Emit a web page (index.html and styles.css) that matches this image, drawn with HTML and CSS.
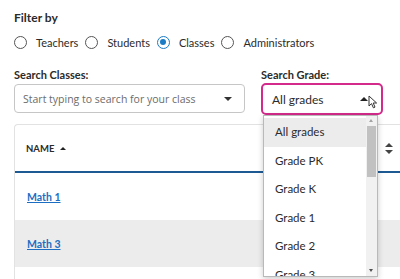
FILE: index.html
```html
<!DOCTYPE html>
<html>
<head>
    <title>Class Filter</title>
    <link rel="stylesheet" href="styles.css">
</head>
<body>
    <div class="page">
        <div class="filter-title">Filter by</div>
        <div class="radios">
            <label class="radio"><span class="ring"></span>Teachers</label>
            <label class="radio"><span class="ring"></span>Students</label>
            <label class="radio checked"><span class="ring"></span>Classes</label>
            <label class="radio"><span class="ring"></span>Administrators</label>
        </div>

        <div class="search-row">
            <div class="field field-class">
                <div class="field-label">Search Classes:</div>
                <div class="combo">
                    <span class="placeholder">Start typing to search for your class</span>
                    <span class="caret-down"></span>
                </div>
            </div>
            <div class="field field-grade">
                <div class="field-label">Search Grade:</div>
                <div class="select">
                    <span>All grades</span>
                    <span class="caret-up"></span>
                    <svg class="pointer" width="10" height="14" viewBox="0 0 10 14">
                        <path d="M1 1 L1 11 L3.5 8.6 L5.4 12.8 L7 12.1 L5.2 8 L8.6 8 Z" fill="#fff" stroke="#333" stroke-width="1" stroke-linejoin="round"/>
                    </svg>
                </div>
                <div class="options">
                    <ul>
                        <li class="active">All grades</li>
                        <li>Grade PK</li>
                        <li>Grade K</li>
                        <li>Grade 1</li>
                        <li>Grade 2</li>
                        <li>Grade 3</li>
                    </ul>
                    <div class="scrollbar">
                        <span class="arrow-up"></span>
                        <span class="thumb"></span>
                        <span class="arrow-down"></span>
                    </div>
                </div>
            </div>
        </div>

        <div class="table-card">
            <div class="thead">
                <span class="th-name">NAME <span class="sort-up"></span></span>
                <span class="th-right">
                    <span class="grip"></span>
                    <svg class="sort-both" width="8" height="11" viewBox="0 0 8 11">
                        <path d="M4 0 L8 4 L0 4 Z M0 7 L8 7 L4 11 Z" fill="#444"/>
                    </svg>
                </span>
            </div>
            <div class="row"><a href="#">Math 1</a></div>
            <div class="row alt"><a href="#">Math 3</a></div>
            <div class="row last"></div>
        </div>
    </div>
</body>
</html>
```

FILE: styles.css
```css
body {
    margin: 0;
    font-family: Lato, "Noto Sans", sans-serif;
    color: #2b2b2b;
    background-color: #fff;
    overflow: hidden;
}
.page {
    padding: 11px 0 0 14px;
    width: 386px;
}
.filter-title {
    font-size: 12px;
    font-weight: 700;
    line-height: 14px;
}
.radios {
    display: flex;
    align-items: center;
    margin-top: 9px;
    height: 16px;
}
.radio {
    display: flex;
    align-items: center;
    font-size: 11px;
    margin-right: 7px;
}
.ring {
    width: 11px;
    height: 11px;
    border: 1.5px solid #555;
    border-radius: 50%;
    margin-right: 9px;
    position: relative;
}
.radio.checked .ring {
    border-color: #1b7bc4;
}
.radio.checked .ring::after {
    content: "";
    position: absolute;
    left: 2.5px;
    top: 2.5px;
    width: 6px;
    height: 6px;
    border-radius: 50%;
    background-color: #1b7bc4;
}
.search-row {
    display: flex;
    margin-top: 18px;
}
.field-label {
    font-size: 11px;
    font-weight: 700;
    line-height: 14px;
}
.field-class {
    width: 231px;
    margin-right: 16px;
}
.combo {
    margin-top: 2px;
    height: 27px;
    border: 1px solid #c6c6c6;
    border-radius: 4px;
    display: flex;
    align-items: center;
    justify-content: space-between;
    padding: 0 12px 0 8px;
}
.placeholder {
    font-family: "Open Sans", sans-serif;
    font-size: 10.5px;
    color: #6b6b6b;
}
.caret-down {
    border-left: 4px solid transparent;
    border-right: 4px solid transparent;
    border-top: 4px solid #333;
}
.field-grade {
    position: relative;
    width: 122px;
}
.select {
    margin-top: 1px;
    height: 28px;
    border: 2px solid #d42a8c;
    border-radius: 5px;
    display: flex;
    align-items: center;
    padding: 0 0 0 9px;
    font-size: 12px;
    position: relative;
}
.caret-up {
    margin-left: auto;
    margin-right: 13px;
    border-left: 4px solid transparent;
    border-right: 4px solid transparent;
    border-bottom: 4px solid #222;
}
.pointer {
    position: absolute;
    right: 3px;
    top: 10px;
}
.options {
    position: absolute;
    left: 2px;
    top: 47px;
    width: 113px;
    height: 160px;
    border: 1px solid #b9b9b9;
    background-color: #fff;
    box-shadow: 0 2px 6px rgba(0, 0, 0, 0.2);
    display: flex;
    overflow: hidden;
    z-index: 2;
}
.options ul {
    list-style: none;
    margin: 0;
    padding: 2px 0 0 0;
    flex-grow: 1;
}
.options li {
    height: 28.5px;
    line-height: 28.5px;
    padding-left: 11px;
    font-size: 11.5px;
}
.options li.active {
    background-color: #ececec;
}
.scrollbar {
    width: 11px;
    background-color: #f1f1f1;
    position: relative;
}
.arrow-up, .arrow-down {
    position: absolute;
    left: 3px;
    border-left: 2.5px solid transparent;
    border-right: 2.5px solid transparent;
}
.arrow-up {
    top: 3px;
    border-bottom: 3px solid #a3a3a3;
}
.arrow-down {
    bottom: 4px;
    border-top: 3px solid #505050;
}
.thumb {
    position: absolute;
    left: 1px;
    right: 1px;
    top: 10px;
    height: 51px;
    background-color: #c1c1c1;
}
.table-card {
    margin-top: 9px;
    border: 1px solid #e2e2e2;
    border-right: none;
    border-bottom: none;
    border-radius: 4px 0 0 0;
}
.thead {
    height: 46px;
    border-bottom: 2px solid #1d5a93;
    display: flex;
    align-items: center;
    justify-content: space-between;
    padding: 0 7px 0 11px;
}
.th-name {
    font-size: 9.5px;
    font-weight: 700;
    display: flex;
    align-items: center;
}
.sort-up {
    margin-left: 6px;
    border-left: 3.5px solid transparent;
    border-right: 3.5px solid transparent;
    border-bottom: 3.5px solid #222;
}
.th-right {
    display: flex;
    align-items: center;
}
.grip {
    width: 1px;
    height: 8px;
    border-left: 1px dotted #999;
    margin-right: 9px;
}
.row {
    height: 47px;
    display: flex;
    align-items: center;
    padding-left: 12px;
}
.row.alt {
    background-color: #ececec;
}
.row.last {
    height: 12px;
}
.row a {
    color: #1b6ec2;
    font-size: 10.5px;
    font-weight: 700;
}
```
